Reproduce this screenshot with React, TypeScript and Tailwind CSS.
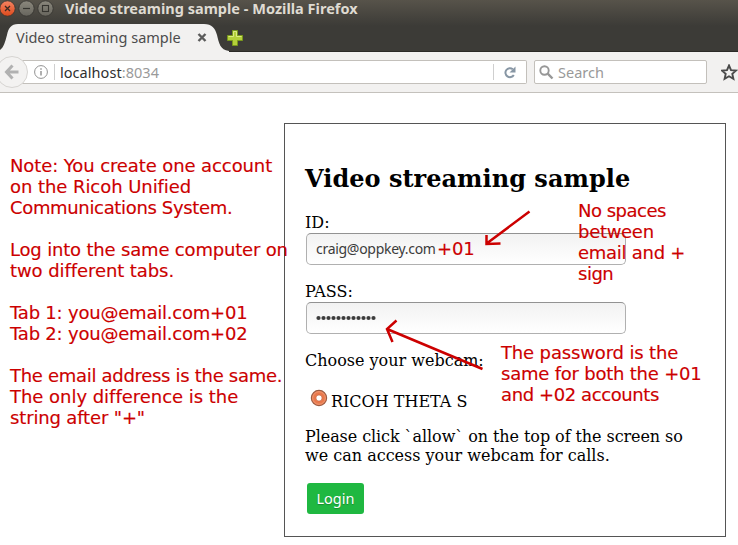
import React from "react";

const ui = "font-['Noto_Sans','Open_Sans',sans-serif]";
const note =
  "font-['DejaVu_Sans',sans-serif] text-[18px] leading-[21px] text-[#cc0000] whitespace-pre [-webkit-text-stroke:0.15px_#cc0000]";

function TitleBar() {
  return (
    <div className="flex h-[18px] items-start">
      <svg width="56" height="18" viewBox="0 0 56 18" className="shrink-0">
        <defs>
          <linearGradient id="close" x1="0" y1="0" x2="0" y2="1">
            <stop offset="0" stopColor="#f58462" />
            <stop offset="1" stopColor="#dd4a1c" />
          </linearGradient>
          <linearGradient id="grey" x1="0" y1="0" x2="0" y2="1">
            <stop offset="0" stopColor="#8b887d" />
            <stop offset="1" stopColor="#67655d" />
          </linearGradient>
        </defs>
        <circle cx="7.5" cy="8.5" r="7.7" fill="url(#close)" stroke="#33322e" strokeWidth="0.8" />
        <path d="M5 6l5 5M10 6l-5 5" stroke="#3b2a23" strokeWidth="1.3" />
        <circle cx="26.5" cy="8.5" r="7.7" fill="url(#grey)" stroke="#33322e" strokeWidth="0.8" />
        <path d="M23 8.5h7" stroke="#35342f" strokeWidth="1.2" />
        <circle cx="45.5" cy="8.5" r="7.7" fill="url(#grey)" stroke="#33322e" strokeWidth="0.8" />
        <rect x="42.5" y="5.5" width="6" height="6" fill="none" stroke="#35342f" strokeWidth="1.1" />
      </svg>
      <span className={`${ui} ml-[9px] whitespace-nowrap text-[14.5px] leading-[16px] font-bold tracking-[0.02px] text-[#dfdbd2]`}>
        Video streaming sample - Mozilla Firefox
      </span>
    </div>
  );
}

function TabStrip() {
  return (
    <div className="relative flex h-[34px] items-center border-b border-[#2b2a27]">
      <svg width="232" height="29" viewBox="0 0 232 29" className="absolute top-[5px] left-0">
        <path
          d="M0 27C4 24 5 19 7 12C8.500 5 11 1 18 1H204C212 1 215 5 217 12C219 20 220 27 229 28V29H0Z"
          fill="#f2f1f0"
        />
      </svg>
      <div className="relative flex h-full w-full items-center">
        <span className={`${ui} ml-[16px] w-[181px] whitespace-nowrap pt-[5px] text-[14.5px] leading-[20px] text-[#4c4c4c]`}>
          Video streaming sample
        </span>
        <svg width="10" height="9" viewBox="0 0 10 9" className="mt-[6px]">
          <path d="M1.500 1l7 7M8.500 1l-7 7" stroke="#5b5b5b" strokeWidth="2.400" />
        </svg>
        <svg width="18" height="18" viewBox="0 0 18 18" className="mt-[6px] ml-[19px]">
          <path
            d="M6.500 1.500h5v5h5v5h-5v5h-5v-5h-5v-5h5z"
            fill="#b4d03a"
            stroke="#79981c"
            strokeWidth="1"
            strokeLinejoin="round"
          />
          <path d="M7.500 2.500h3v5h5M2.500 7.500h5v-5" fill="none" stroke="#dcec83" />
        </svg>
      </div>
    </div>
  );
}

function NavBar() {
  return (
    <div className="flex h-[41px] items-center border-b border-[#c4c1bc] bg-[#f2f1f0]">
      <div className="relative flex h-6 w-[527px] shrink-0 items-center rounded-r-[2px] border border-l-0 border-[#c3c0bb] bg-white">
        <svg width="28" height="32" viewBox="0 0 28 32" className="absolute -top-[5px] left-0">
          <path d="M0 4H12V29H0Z" fill="#f2f1f0" />
          <circle cx="12" cy="16" r="15.500" fill="#f3f2f1" stroke="#d6d4d1" />
          <path d="M18.500 16H8M12.500 9.500L6.500 16l6 6.500" fill="none" stroke="#b1b1b1" strokeWidth="3" />
        </svg>
        <svg width="14" height="14" viewBox="0 0 14 14" className="ml-[34px] shrink-0">
          <circle cx="7" cy="7" r="6.400" fill="none" stroke="#929292" strokeWidth="1" />
          <path d="M7 6v4.500M7 3.300v1.500" stroke="#858585" strokeWidth="1.300" />
        </svg>
        <span className="ml-[6px] h-4 w-px bg-[#cfcfcf]" />
        <span className={`${ui} ml-[5px] grow text-[14.5px] leading-[20px] tracking-[0.05px] text-[#303030]`}>
          localhost<span className="text-[#9a9a9a]">:8034</span>
        </span>
        <span className="h-4 w-px bg-[#cfcfcf]" />
        <svg width="12" height="13" viewBox="0 0 12 13" className="mr-[10px] ml-[10px]">
          <path d="M8.800 3.200A4.500 4.500 0 1 0 9.800 9" fill="none" stroke="#8796a4" strokeWidth="2" />
          <path d="M11.500 0.500V6.500H5.500z" fill="#8796a4" />
        </svg>
      </div>
      <div className="ml-[7px] flex h-6 w-[173px] shrink-0 items-center rounded-[2px] border border-[#c3c0bb] bg-white">
        <svg width="15" height="15" viewBox="0 0 15 15" className="ml-[4px]">
          <circle cx="5.500" cy="5.500" r="4.200" fill="none" stroke="#979797" strokeWidth="1.900" />
          <path d="M8.700 8.700L13.500 13.500" stroke="#979797" strokeWidth="2.400" />
        </svg>
        <span className={`${ui} ml-[4px] text-[14.5px] leading-[20px] text-[#999]`}>Search</span>
      </div>
      <svg width="17" height="17" viewBox="0 0 17 17" className="ml-[14px] shrink-0">
        <path
          d="M8 1.500l2 4.600 5 .5-3.700 3.300 1.100 5L8 12.300l-4.400 2.600 1.100-5L1 6.600l5-.5z"
          fill="none"
          stroke="#4a4a4a"
          strokeWidth="1.900"
        />
      </svg>
    </div>
  );
}

function Field({ children }: { children: React.ReactNode }) {
  return (
    <div className="ml-px flex h-8 w-[320px] items-center rounded-[5px] border border-[#b0b0b0] border-t-[#929292] bg-linear-to-b from-[#f2f2f2] to-white pl-[9px]">
      {children}
    </div>
  );
}

function LoginForm() {
  return (
    <form className="h-[414px] w-[442px] shrink-0 border border-[#555] pl-[20px] font-['DejaVu_Serif',serif] text-[16px] leading-[19px] text-black">
      <h1 className="mt-[41px] text-[24px] leading-[28px] font-bold tracking-[0.03px] whitespace-nowrap">Video streaming sample</h1>
      <label className="mt-[20px] block">ID:</label>
      <div className="mt-px">
        <Field>
          <span className={`${ui} text-[14px] leading-[20px] tracking-[-0.29px] text-[#3c3c3c]`}>craig@oppkey.com</span>
        </Field>
      </div>
      <label className="mt-[17px] block">PASS:</label>
      <div className="mt-px">
        <Field>
          <svg width="62" height="6" viewBox="0 0 62 6">
            {Array.from({ length: 12 }, (_, i) => (
              <circle key={i} cx={2.5 + i * 5} cy="3" r="2.1" fill="#3c3c3c" />
            ))}
          </svg>
        </Field>
      </div>
      <p className="mt-[17px]">Choose your webcam:</p>
      <div className="mt-[22px] flex h-[19px]">
        <svg width="18" height="18" viewBox="0 0 18 18" className="-mt-[3px] ml-[5px]">
          <circle cx="9" cy="9" r="7.600" fill="#e9784c" stroke="#9b5a41" strokeWidth="1.200" />
          <circle cx="9" cy="9" r="6.300" fill="none" stroke="#f09a74" strokeWidth="1" />
          <circle cx="9" cy="9" r="3.100" fill="#fff" stroke="#c5633d" strokeWidth="0.700" />
        </svg>
        <span className="ml-[3px]">RICOH THETA S</span>
      </div>
      <p className="mt-[16px] whitespace-nowrap">
        <span className="tracking-[-0.075px]">Please click `allow` on the top of the screen so</span>
        <br />
        we can access your webcam for calls.
      </p>
      <button
        type="button"
        className={`${ui} mt-[18px] ml-[2px] flex h-[31px] w-[57px] items-center justify-center rounded-[3px] bg-[#1fb841] text-[14.5px] text-white [text-shadow:0_1px_1px_rgba(0,0,0,0.25)]`}
      >
        Login
      </button>
    </form>
  );
}

export default function App() {
  return (
    <div className="relative h-[545px] w-[738px] overflow-hidden bg-white">
      <header className="bg-linear-to-b from-[#57534a] to-[#3c3b37] to-[26px]">
        <TitleBar />
        <TabStrip />
      </header>
      <NavBar />
      <main className="flex pt-[30px]">
        <aside className={`${note} relative z-10 flex w-[284px] shrink-0 flex-col gap-[21px] pt-[32px] pl-[10px]`}>
          <div>
            <p className="tracking-[-0.1px]">Note: You create one account</p>
            <p className="tracking-[-0.06px]">on the Ricoh Unified</p>
            <p className="tracking-[-0.34px]">Communications System.</p>
          </div>
          <div>
            <p className="tracking-[-0.18px]">Log into the same computer on</p>
            <p className="tracking-[-0.08px]">two different tabs.</p>
          </div>
          <div>
            <p className="tracking-[-0.21px]">Tab 1: you@email.com+01</p>
            <p className="tracking-[-0.21px]">Tab 2: you@email.com+02</p>
          </div>
          <div>
            <p className="tracking-[-0.3px]">The email address is the same.</p>
            <p className="tracking-[-0.03px]">The only difference is the</p>
            <p className="tracking-[-0.15px]">string after "+"</p>
          </div>
        </aside>
        <LoginForm />
      </main>
      <span className={`${note} absolute top-[238px] left-[437px] tracking-[-0.2px]`}>+01</span>
      <div className={`${note} absolute top-[200px] left-[578px]`}>
        <p className="tracking-[-0.5px]">No spaces</p>
        <p className="tracking-[-0.3px]">between</p>
        <p className="tracking-[-0.27px]">email and +</p>
        <p className="tracking-[-0.5px]">sign</p>
      </div>
      <div className={`${note} absolute top-[342px] left-[501px]`}>
        <p className="tracking-[-0.15px]">The password is the</p>
        <p className="tracking-[-0.22px]">same for both the +01</p>
        <p className="tracking-[-0.4px]">and +02 accounts</p>
      </div>
      <svg width="738" height="545" viewBox="0 0 738 545" className="pointer-events-none absolute inset-0">
        <g fill="none" stroke="#cc0000" strokeWidth="2.500">
          <path d="M529.500 211.500L486 244M486.500 235V244L500.500 243.500" />
          <path d="M482.500 369L387 329M396.500 320.500L387 329L392.500 342" />
        </g>
      </svg>
    </div>
  );
}
